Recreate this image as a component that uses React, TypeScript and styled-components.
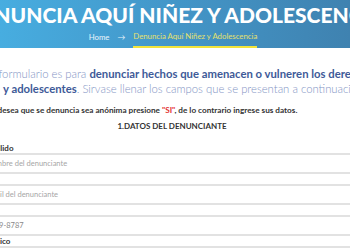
import React from 'react';
import styled, {createGlobalStyle} from "styled-components";

const GlobalStyle = createGlobalStyle`
  html, body {
    margin: 0;
    padding: 0;
    background: #ffffff;
    overflow: hidden;
  }
  body {
    font-family: "Lato", "Open Sans", sans-serif;
  }
`

type FieldPropsType = {
    label: string
    placeholder?: string
    value?: string
}

const Field = (props: FieldPropsType) => {
    return (
        <StyledField>
            <Label>{props.label}</Label>
            <Input placeholder={props.placeholder} defaultValue={props.value}/>
        </StyledField>
    );
};

export default function App() {
    return (
        <>
            <GlobalStyle/>
            <Banner>
                <Title>DENUNCIA AQUÍ NIÑEZ Y ADOLESCENCIA</Title>
                <Crumbs>
                    <CrumbLink href={"#"}>Home</CrumbLink>
                    <Arrow>→</Arrow>
                    <CrumbCurrent>Denuncia Aquí Niñez y Adolescencia</CrumbCurrent>
                </Crumbs>
            </Banner>
            <Content>
                <Intro>
                    <Line indent={6}>
                        El presente formulario es para <strong>denunciar hechos que amenacen o vulneren los derechos de</strong>
                    </Line>
                    <Line indent={68}>
                        <strong>y adolescentes</strong>. Sirvase llenar los campos que se presentan a continuación.
                    </Line>
                </Intro>
                <Note>
                    Si desea que se denuncia sea anónima presione <Red>"SI"</Red>, de lo contrario ingrese sus datos.
                </Note>
                <Form>
                    <SectionTitle>1.DATOS DEL DENUNCIANTE</SectionTitle>
                    <Field label={"Apellido"} placeholder={"Nombre del denunciante"}/>
                    <Field label={"Mail"} placeholder={"Email del denunciante"}/>
                    <Field label={"Cel."} value={"0999-8787"}/>
                    <Field label={"Público"}/>
                </Form>
            </Content>
        </>
    );
}

const Banner = styled.header`
  height: 48px;
  background: linear-gradient(90deg, #47ade0 0%, #4396c8 50%, #3f82b0 100%);
  display: flex;
  flex-direction: column;
  align-items: center;
  overflow: visible;
`

const Title = styled.h1`
  margin: 4px 0 0;
  font-family: "Lato", sans-serif;
  font-weight: 900;
  font-size: 21px;
  line-height: 22px;
  color: #ffffff;
  white-space: nowrap;
`

const Crumbs = styled.nav`
  display: flex;
  align-items: flex-end;
  gap: 8px;
  margin-top: 5px;
  margin-left: -4px;
  font-size: 7.8px;
  white-space: nowrap;
`

const CrumbLink = styled.a`
  color: #eaf4fb;
  text-decoration: none;
  padding-bottom: 6px;
`

const Arrow = styled.span`
  color: #eaf4fb;
  padding-bottom: 6px;
`

const CrumbCurrent = styled.span`
  color: #e4e06c;
  padding-bottom: 5px;
  border-bottom: 2px solid #f2e43a;
`

const Content = styled.main`
  margin-left: -70px;
  width: 484px;
`

const Intro = styled.div`
  margin-top: 18px;
  font-size: 11.3px;
  line-height: 15px;
  font-weight: 300;
  color: #8394c4;
  white-space: nowrap;

  strong {
    font-weight: 700;
    color: #3e5a98;
  }
`

const Line = styled.p<{ indent: number }>`
  margin: 0;
  padding-left: ${props => 5 + props.indent}px;
`

const Note = styled.p`
  margin: 9px 0 0 59px;
  font-size: 8.2px;
  line-height: 10px;
  font-weight: 700;
  color: #333333;
  white-space: nowrap;
`

const Red = styled.span`
  color: #e23232;
`

const Form = styled.form`
  display: flex;
  flex-direction: column;
  padding-left: 54px;
  margin-top: 6px;
`

const SectionTitle = styled.h2`
  margin: 0 0 12px -54px;
  font-size: 8px;
  line-height: 10px;
  font-weight: 700;
  color: #333333;
  text-align: center;
`

const StyledField = styled.div`
  display: flex;
  flex-direction: column;
`

const Label = styled.label`
  font-size: 8px;
  line-height: 10px;
  font-weight: 700;
  color: #333333;
`

const Input = styled.input`
  box-sizing: border-box;
  height: 21px;
  width: 100%;
  padding: 0 0;
  border: 2px solid #e2e2e2;
  font-family: "Lato", sans-serif;
  font-size: 7.5px;
  color: #888888;
  outline: none;

  &::placeholder {
    color: #a6a6a6;
  }
`
